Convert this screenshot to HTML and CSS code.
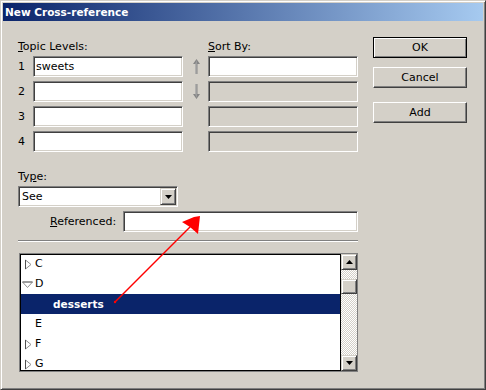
FILE: index.html
```html
<!DOCTYPE html>
<html lang="en">
<head>
  <meta charset="UTF-8">
  <title>New Cross-reference</title>
  <link rel="stylesheet" href="styles.css">
</head>
<body>

<div class="window">
  <div class="titlebar">New Cross-reference</div>

  <div class="body">
    <div class="top">
      <div class="levels">
        <div class="label topic-label"><u>T</u>opic Levels:</div>
        <div class="label sort-label"><u>S</u>ort By:</div>

        <span class="num">1</span>
        <input class="field" value="sweets">
        <span class="move">
          <svg width="7" height="15" viewBox="0 0 7 15"><path d="M3.5 0 L7 5 L4.5 5 L4.5 15 L2.5 15 L2.5 5 L0 5 Z" fill="#858585"/><path d="M2.5 5 L2.5 15 L3.5 15 L3.5 1 Z" fill="#b4b4b4"/></svg>
        </span>
        <input class="field">

        <span class="num">2</span>
        <input class="field">
        <span class="move">
          <svg width="7" height="15" viewBox="0 0 7 15"><path d="M3.5 15 L7 10 L4.5 10 L4.5 0 L2.5 0 L2.5 10 L0 10 Z" fill="#858585"/><path d="M2.5 10 L2.5 0 L3.5 0 L3.5 14 Z" fill="#b4b4b4"/></svg>
        </span>
        <input class="field" disabled>

        <span class="num">3</span>
        <input class="field">
        <span class="move"></span>
        <input class="field" disabled>

        <span class="num">4</span>
        <input class="field">
        <span class="move"></span>
        <input class="field" disabled>
      </div>

      <div class="buttons">
        <button class="btn default">OK</button>
        <button class="btn">Cancel</button>
        <button class="btn add">Add</button>
      </div>
    </div>

    <div class="lower">
      <div class="label type-label">Ty<u>p</u>e:</div>
      <div class="combo">
        <span class="combo-text">See</span>
        <span class="drop">
          <svg width="7" height="4" viewBox="0 0 7 4"><path d="M0 0 H7 L3.5 4 Z" fill="#000"/></svg>
        </span>
      </div>

      <div class="ref-row">
        <span class="label"><u>R</u>eferenced:</span>
        <input class="field ref-field">
      </div>

      <div class="separator"></div>

      <div class="listbox">
        <ul class="tree">
          <li>
            <svg class="twisty" width="11" height="11" viewBox="0 0 11 11"><path d="M3.5 1 L9 5.5 L3.5 10 Z" fill="#fff" stroke="#909090"/><path d="M3.5 1 V10" stroke="#505050"/></svg>
            C
          </li>
          <li>
            <svg class="twisty" width="11" height="11" viewBox="0 0 11 11"><path d="M0.5 3 L10.5 3 L5.5 8.5 Z" fill="#fff" stroke="#909090"/><path d="M0.5 3 H10.5" stroke="#707070"/></svg>
            D
          </li>
          <li class="child selected">desserts</li>
          <li><span class="twisty"></span>E</li>
          <li>
            <svg class="twisty" width="11" height="11" viewBox="0 0 11 11"><path d="M3.5 1 L9 5.5 L3.5 10 Z" fill="#fff" stroke="#909090"/><path d="M3.5 1 V10" stroke="#505050"/></svg>
            F
          </li>
          <li>
            <svg class="twisty" width="11" height="11" viewBox="0 0 11 11"><path d="M3.5 1 L9 5.5 L3.5 10 Z" fill="#fff" stroke="#909090"/><path d="M3.5 1 V10" stroke="#505050"/></svg>
            G
          </li>
        </ul>
        <div class="scrollbar">
          <div class="sb-btn">
            <svg width="7" height="4" viewBox="0 0 7 4"><path d="M3.5 0 L7 4 H0 Z" fill="#000"/></svg>
          </div>
          <div class="sb-btn thumb"></div>
          <div class="sb-btn down">
            <svg width="7" height="4" viewBox="0 0 7 4"><path d="M0 0 H7 L3.5 4 Z" fill="#000"/></svg>
          </div>
        </div>
      </div>
    </div>
  </div>

  <!-- red annotation arrow drawn over the dialog -->
  <svg class="annotation" width="486" height="390" viewBox="0 0 486 390">
    <line x1="115" y1="302" x2="191" y2="226" stroke="#ff0000" stroke-width="1.5"/>
    <circle cx="115" cy="302" r="1.2" fill="#ff0000"/>
    <path d="M200 216 L198 234 L190 227 L182 222 L194 217 Z" fill="#ff0000"/>
  </svg>
</div>

</body>
</html>
```

FILE: styles.css
```css
body {
  margin: 0;
  font-family: "DejaVu Sans", sans-serif;
  font-size: 11px;
  color: #000;
  background-color: #d4d0c8;
}
.window {
  position: relative;
  width: 486px;
  height: 390px;
  box-sizing: border-box;
  padding: 2px;
  background-color: #d4d0c8;
  border: 1px solid;
  border-color: #d4d0c8 #404040 #404040 #d4d0c8;
  box-shadow: inset 1px 1px #fff, inset -1px -1px #808080;
}
.titlebar {
  height: 18px;
  line-height: 18px;
  padding-left: 2px;
  color: #fff;
  font-size: 10.5px;
  font-weight: bold;
  background: linear-gradient(to right, #0a246a, #a6caf0);
}
.body {
  padding-left: 15px;
}
.label {
  line-height: 13px;
  white-space: nowrap;
}
.top {
  display: flex;
  align-items: flex-start;
}
.levels {
  display: grid;
  grid-template-columns: 15px 150px 25px 150px;
  grid-template-rows: 12px repeat(4, 21px);
  row-gap: 4px;
  margin-top: 19px;
}
.topic-label {
  grid-column: 1 / 3;
}
.sort-label {
  grid-column: 4;
}
.num {
  align-self: center;
}
.move {
  display: flex;
  align-items: center;
  padding-left: 10px;
}
.move svg {
  display: block;
}
.field {
  box-sizing: border-box;
  width: 100%;
  height: 21px;
  margin: 0;
  padding: 0 2px;
  font-family: "DejaVu Sans", sans-serif;
  font-size: 11px;
  color: #000;
  background-color: #fff;
  border: 1px solid;
  border-color: #808080 #fff #fff #808080;
  box-shadow: inset 1px 1px #404040, inset -1px -1px #d4d0c8;
  outline: none;
}
.field:disabled {
  background-color: #d4d0c8;
}
.buttons {
  display: flex;
  flex-direction: column;
  margin-top: 16px;
  margin-left: 15px;
}
.btn {
  width: 94px;
  height: 21px;
  margin: 0 0 9px 0;
  padding: 0;
  font-family: "DejaVu Sans", sans-serif;
  font-size: 11px;
  color: #000;
  background-color: #d4d0c8;
  border: 1px solid;
  border-color: #fff #404040 #404040 #fff;
  box-shadow: inset -1px -1px #808080, inset 1px 1px #d4d0c8;
}
.btn.default {
  border-color: #000;
  box-shadow: inset 1px 1px #fff, inset -1px -1px #808080;
}
.btn.add {
  margin-top: 5px;
}
.lower {
  width: 340px;
}
.type-label {
  margin-top: 18px;
}
.combo {
  display: flex;
  align-items: center;
  box-sizing: border-box;
  width: 160px;
  height: 21px;
  margin-top: 3px;
  padding: 1px;
  background-color: #fff;
  border: 1px solid;
  border-color: #808080 #fff #fff #808080;
  box-shadow: inset 1px 1px #404040, inset -1px -1px #d4d0c8;
}
.combo-text {
  flex: 1;
  padding-left: 2px;
}
.drop {
  display: flex;
  align-items: center;
  justify-content: center;
  box-sizing: border-box;
  width: 16px;
  height: 17px;
  background-color: #d4d0c8;
  border: 1px solid;
  border-color: #d4d0c8 #404040 #404040 #d4d0c8;
  box-shadow: inset 1px 1px #fff, inset -1px -1px #808080;
}
.drop svg {
  display: block;
}
.ref-row {
  display: flex;
  align-items: center;
  margin-top: 4px;
}
.ref-row .label {
  margin-left: 32px;
}
.ref-field {
  width: 235px;
  margin-left: auto;
}
.separator {
  margin-top: 8px;
  height: 1px;
  background-color: #808080;
  border-bottom: 1px solid #fff;
}
.listbox {
  display: flex;
  box-sizing: border-box;
  width: 339px;
  height: 119px;
  margin-top: 11px;
  margin-left: 1px;
  border: 1px solid #808080;
}
.tree {
  flex: 1;
  margin: 0;
  padding: 0;
  list-style: none;
  overflow: hidden;
  background-color: #fff;
  border: 1px solid #000;
}
.tree li {
  display: flex;
  align-items: center;
  height: 20px;
  line-height: 20px;
}
.tree li:first-child {
  margin-top: -1px;
}
.twisty {
  display: block;
  width: 11px;
  height: 11px;
  margin: 0 2px 0 1px;
  flex: none;
}
.tree .child {
  padding-left: 32px;
}
.tree .selected {
  color: #fff;
  font-weight: bold;
  font-size: 10.5px;
  background-color: #0a246a;
}
.scrollbar {
  display: flex;
  flex-direction: column;
  width: 16px;
  background: repeating-conic-gradient(#fff 0 25%, #d4d0c8 0 50%) 0 0 / 2px 2px;
}
.sb-btn {
  display: flex;
  align-items: center;
  justify-content: center;
  box-sizing: border-box;
  width: 16px;
  height: 16px;
  background-color: #d4d0c8;
  border: 1px solid;
  border-color: #d4d0c8 #404040 #404040 #d4d0c8;
  box-shadow: inset 1px 1px #fff, inset -1px -1px #808080;
}
.sb-btn svg {
  display: block;
}
.thumb {
  height: 15px;
  margin-top: 9px;
}
.sb-btn.down {
  margin-top: auto;
}
.annotation {
  position: absolute;
  top: -1px;
  left: -1px;
  pointer-events: none;
}
```
